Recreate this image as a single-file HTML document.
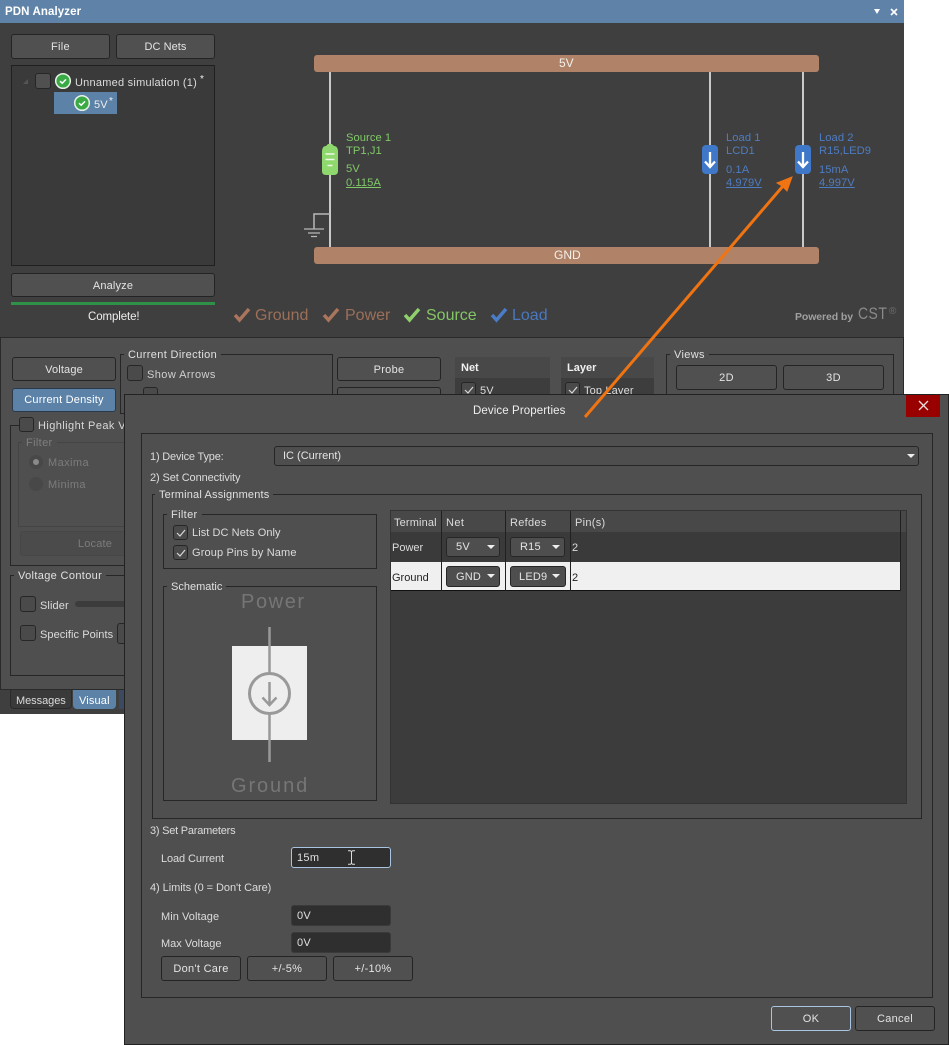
<!DOCTYPE html>
<html><head><meta charset="utf-8"><style>
html,body{margin:0;padding:0;background:#fff}
#p{position:relative;width:949px;height:1045px;overflow:hidden;background:#fff;font-family:"Liberation Sans",sans-serif}
#p div,#p svg{position:absolute;box-sizing:border-box}
.t{white-space:nowrap;font-size:11px;line-height:14px;letter-spacing:.15px;color:#dcdcdc;transform:translateY(-6px)}
.b{background:#505050;border:1px solid #242424;border-radius:3px;color:#e4e4e4;font-size:11px;letter-spacing:.3px;text-align:center;white-space:nowrap;padding-top:1px}
.g{border:1px solid #262626}
.l{background:#4f4f4f;padding:0 4px;white-space:nowrap;font-size:11px;line-height:14px;letter-spacing:.35px;color:#e0e0e0;transform:translateY(-6px)}
.c{background:#4a4a4a;border:1px solid #262626;border-radius:3px}
.in{background:#2f2f2f;border:1px solid #3a3a3a;border-radius:3px;color:#e0e0e0;font-size:11px;letter-spacing:.3px;padding-left:5px;padding-top:1px}
.cb{background:#4e4e4e;border:1px solid #262626;border-radius:3px;color:#e4e4e4;font-size:11px;letter-spacing:.2px;white-space:nowrap;padding-top:1px}
.ar{width:0;height:0;border-left:4px solid transparent;border-right:4px solid transparent;border-top:4px solid #eee}
.r1{color:#7fc968;font-size:11.2px!important;letter-spacing:.05px!important}.bl{color:#4e7cc2;font-size:11.2px!important;letter-spacing:.05px!important}
.lg{white-space:nowrap;font-size:16px;line-height:20px;transform:translateY(-10px)}
</style></head><body><div id="p">

<!-- main window -->
<div style="left:0;top:0;width:904px;height:23px;background:#5f83a8"></div>
<div class="t" style="left:5px;top:11px;color:#fff;font-weight:bold;font-size:11.5px;letter-spacing:.1px">PDN Analyzer</div>
<div class="ar" style="left:874px;top:9px;border-top-color:#fff;border-left-width:3.5px;border-right-width:3.5px;border-top-width:5px"></div>
<svg style="left:890px;top:8px" width="8" height="8"><path d="M1 1L7 7M7 1L1 7" stroke="#fff" stroke-width="1.6"/></svg>
<div style="left:0;top:23px;width:904px;height:314px;background:#3f3f3f"></div>

<div class="b" style="left:11px;top:34px;width:99px;height:25px;line-height:23px">File</div>
<div class="b" style="left:116px;top:34px;width:99px;height:25px;line-height:23px;letter-spacing:.05px">DC Nets</div>
<div style="left:11px;top:65px;width:204px;height:201px;background:#3a3a3a;border:1px solid #202020"></div>
<svg style="left:23px;top:79px" width="6" height="6"><path d="M5 0V5H0Z" fill="#555"/></svg>
<div class="c" style="left:35px;top:73px;width:16px;height:16px;background:#505050"></div>
<svg style="left:54px;top:72px" width="18" height="18"><circle cx="9" cy="9" r="7.3" fill="#3aaa45" stroke="#e6f2e6" stroke-width="1.5"/><path d="M6 9.2L8.2 11.2L12 7.4" fill="none" stroke="#fff" stroke-width="1.5"/></svg>
<div class="t" style="left:75px;top:82px;letter-spacing:.24px">Unnamed simulation (1)</div>
<div class="t" style="left:200px;top:79px;color:#eee;font-size:10px">*</div>
<div style="left:54px;top:92px;width:63px;height:22px;background:#5c82a8"></div>
<svg style="left:73px;top:94px" width="18" height="18"><circle cx="9" cy="9" r="7.3" fill="#3aaa45" stroke="#e6f2e6" stroke-width="1.5"/><path d="M6 9.2L8.2 11.2L12 7.4" fill="none" stroke="#fff" stroke-width="1.5"/></svg>
<div class="t" style="left:94px;top:104px;color:#eee">5V</div>
<div class="t" style="left:109px;top:101px;color:#eee;font-size:10px">*</div>
<div class="b" style="left:11px;top:273px;width:204px;height:24px;line-height:22px;letter-spacing:.15px">Analyze</div>
<div style="left:11px;top:302px;width:204px;height:3px;background:#2f9148"></div>
<div class="t" style="left:88px;top:316px;color:#eee;letter-spacing:-.1px;font-size:11.5px">Complete!</div>

<!-- schematic -->
<svg style="left:300px;top:40px" width="600" height="240">
<g stroke="#c9c9c9" stroke-width="2" fill="none">
<path d="M30 30V208M410 30V208M503 30V208"/>
<path d="M30 174H14V189" stroke-width="1.5" stroke="#b8b8b8"/>
<path d="M4 189H24M8 193H20M11 196.500H17" stroke-width="1.300" stroke="#b8b8b8"/>
</g>
<rect x="14" y="15" width="505" height="17" rx="3" fill="#b08368"/>
<rect x="14" y="207" width="505" height="17" rx="3" fill="#b08368"/>
<path d="M22 112Q22 106 26 106L28 104H32L34 106Q38 106 38 112V131Q38 135 34 135H26Q22 135 22 131Z" fill="#8ed86e"/>
<path d="M25.500 114H34.500M25.500 119.500H34.500M27.500 125.500H32.500" stroke="#f0f8e8" stroke-width="1.500"/>
<rect x="402" y="105" width="16" height="29" rx="4" fill="#3f78c8"/>
<rect x="495" y="105" width="16" height="29" rx="4" fill="#3f78c8"/>
<path d="M410 112V127M405 121.500L410 127L415 121.500M503 112V127M498 121.500L503 127L508 121.500" stroke="#fff" stroke-width="2.300" fill="none"/>
</svg>
<div class="t" style="left:559px;top:62px;color:#f4f0ec;font-size:12px;letter-spacing:0">5V</div>
<div class="t" style="left:554px;top:254px;color:#f4f0ec;font-size:12px;letter-spacing:0">GND</div>

<div class="t r1" style="left:346px;top:137px">Source 1</div>
<div class="t r1" style="left:346px;top:150px">TP1,J1</div>
<div class="t r1" style="left:346px;top:168px">5V</div>
<div class="t r1" style="left:346px;top:182px;text-decoration:underline">0.115A</div>

<div class="t bl" style="left:726px;top:137px">Load 1</div>
<div class="t bl" style="left:726px;top:150px">LCD1</div>
<div class="t bl" style="left:726px;top:169px">0.1A</div>
<div class="t bl" style="left:726px;top:182px;text-decoration:underline">4.979V</div>
<div class="t bl" style="left:819px;top:137px">Load 2</div>
<div class="t bl" style="left:819px;top:150px">R15,LED9</div>
<div class="t bl" style="left:819px;top:169px">15mA</div>
<div class="t bl" style="left:819px;top:182px;text-decoration:underline">4.997V</div>

<!-- legend -->
<svg style="left:234px;top:307px" width="320" height="16" fill="none" stroke-width="3.500">
<path d="M1 8L5.500 13L15 2" stroke="#a9755c"/>
<path d="M90 8L94.500 13L104 2" stroke="#a9755c"/>
<path d="M171 8L175.500 13L185 2" stroke="#8fd06c"/>
<path d="M258 8L262.500 13L272 2" stroke="#4a7cc8"/>
</svg>
<div class="lg" style="left:255px;top:316px;color:#9c6f59">Ground</div>
<div class="lg" style="left:345px;top:316px;color:#9c6f59">Power</div>
<div class="lg" style="left:426px;top:316px;color:#84c566">Source</div>
<div class="lg" style="left:512px;top:316px;color:#4a78be">Load</div>

<div class="t" style="left:795px;top:316px;color:#a0a0a0;font-weight:bold;letter-spacing:-.1px;font-size:10.500px">Powered by</div>
<div class="t" style="left:858px;top:313px;color:#8a8a8a;font-size:17px;letter-spacing:.6px;line-height:14px;transform:translateY(-6px) scaleX(.82);transform-origin:left">CST</div>
<div class="t" style="left:889px;top:311px;color:#6f6f6f;font-size:10px;letter-spacing:0">®</div>

<!-- lower panel -->
<div style="left:0;top:337px;width:904px;height:353px;background:#4f4f4f;border:1px solid #2a2a2a"></div>
<div class="b" style="left:12px;top:357px;width:104px;height:24px;line-height:22px;letter-spacing:.15px">Voltage</div>
<div class="b" style="left:12px;top:388px;width:104px;height:24px;line-height:21px;background:#5c82a8;border-color:#2a3a4c;color:#fff;letter-spacing:.2px">Current Density</div>
<div class="g" style="left:120px;top:354px;width:213px;height:60px"></div>
<div class="l" style="left:124px;top:354px">Current Direction</div>
<div class="c" style="left:127px;top:365px;width:16px;height:16px"></div>
<div class="t" style="left:147px;top:374px;color:#cfcfcf;letter-spacing:.42px">Show Arrows</div>
<div class="c" style="left:143px;top:387px;width:15px;height:15px"></div>
<div class="g" style="left:10px;top:425px;width:130px;height:141px"></div>
<div class="c" style="left:19px;top:417px;width:15px;height:15px;z-index:1"></div>
<div class="l" style="left:34px;top:425px;color:#d8d8d8;letter-spacing:.42px">Highlight Peak V</div>
<div class="g" style="left:18px;top:442px;width:120px;height:85px;border-color:#444"></div>
<div class="l" style="left:22px;top:442px;padding:0 4px;color:#7f7f7f">Filter</div>
<div style="left:29px;top:455px;width:14px;height:14px;border-radius:50%;background:#484848"></div>
<div style="left:33px;top:459px;width:6px;height:6px;border-radius:50%;background:#8a8a8a"></div>
<div class="t" style="left:48px;top:462px;color:#7c7c7c;letter-spacing:.42px">Maxima</div>
<div style="left:29px;top:477px;width:14px;height:14px;border-radius:50%;background:#484848"></div>
<div class="t" style="left:48px;top:484px;color:#7c7c7c;letter-spacing:.42px">Minima</div>
<div class="b" style="left:20px;top:531px;width:150px;height:25px;line-height:23px;background:#4b4b4b;border-color:#474747;color:#7c7c7c;letter-spacing:.2px">Locate</div>
<div class="g" style="left:10px;top:575px;width:130px;height:101px"></div>
<div class="l" style="left:14px;top:575px">Voltage Contour</div>
<div class="c" style="left:20px;top:596px;width:16px;height:16px"></div>
<div class="t" style="left:40px;top:605px;letter-spacing:.1px">Slider</div>
<div style="left:75px;top:601px;width:60px;height:6px;background:#3c3c3c;border-radius:3px"></div>
<div class="c" style="left:20px;top:625px;width:16px;height:16px"></div>
<div class="t" style="left:40px;top:634px;letter-spacing:.07px">Specific Points</div>
<div class="c" style="left:117px;top:623px;width:20px;height:21px"></div>

<div class="b" style="left:337px;top:357px;width:104px;height:24px;line-height:22px">Probe</div>
<div class="b" style="left:337px;top:387px;width:104px;height:24px"></div>
<div style="left:455px;top:357px;width:95px;height:21px;background:#484848"></div>
<div class="t" style="left:461px;top:367px;color:#f0f0f0;font-weight:bold;letter-spacing:0">Net</div>
<div style="left:455px;top:378px;width:95px;height:20px;background:#3d3d3d"></div>
<div class="c" style="left:461px;top:382px;width:15px;height:15px"></div>
<svg style="left:464px;top:386px" width="10" height="8"><path d="M1 4L4 7L9 1" fill="none" stroke="#d8d8d8" stroke-width="1.200"/></svg>
<div class="t" style="left:480px;top:390px">5V</div>
<div style="left:561px;top:357px;width:93px;height:21px;background:#484848"></div>
<div class="t" style="left:567px;top:367px;color:#f0f0f0;font-weight:bold;letter-spacing:0">Layer</div>
<div style="left:561px;top:378px;width:93px;height:20px;background:#3d3d3d"></div>
<div class="c" style="left:565px;top:382px;width:15px;height:15px"></div>
<svg style="left:568px;top:386px" width="10" height="8"><path d="M1 4L4 7L9 1" fill="none" stroke="#d8d8d8" stroke-width="1.200"/></svg>
<div class="t" style="left:584px;top:390px">Top Layer</div>
<div class="g" style="left:666px;top:354px;width:228px;height:60px"></div>
<div class="l" style="left:670px;top:354px">Views</div>
<div class="b" style="left:676px;top:365px;width:101px;height:25px;line-height:23px">2D</div>
<div class="b" style="left:783px;top:365px;width:101px;height:25px;line-height:23px">3D</div>

<!-- tabs -->
<div style="left:0;top:690px;width:130px;height:24px;background:#3f3f3f"></div>
<div style="left:10px;top:690px;width:62px;height:19px;background:#3a3a3a;border:1px solid #2a2a2a;border-top:0;border-radius:0 0 4px 4px"></div>
<div class="t" style="left:16px;top:700px;letter-spacing:-.05px">Messages</div>
<div style="left:73px;top:690px;width:43px;height:19px;background:#5c82a8;border-radius:0 0 4px 4px"></div>
<div class="t" style="left:79px;top:700px;color:#fff">Visual</div>
<div style="left:119px;top:690px;width:8px;height:19px;background:#3c4a60"></div>

<!-- dialog -->
<div style="left:124px;top:394px;width:825px;height:651px;background:#4f4f4f;border:1px solid #222"></div>
<div style="left:906px;top:395px;width:34px;height:22px;background:#990000"></div>
<svg style="left:918px;top:400px" width="11" height="11"><path d="M1 1L10 10M10 1L1 10" stroke="#f0e0e0" stroke-width="1.300"/></svg>
<div class="t" style="left:473px;top:410px;color:#eee;letter-spacing:.1px;font-size:11.500px">Device Properties</div>
<div class="g" style="left:141px;top:433px;width:792px;height:565px"></div>
<div class="t" style="left:150px;top:456px;letter-spacing:-.18px">1) Device Type:</div>
<div class="cb" style="left:274px;top:446px;width:645px;height:20px;line-height:17px;padding-left:8px;letter-spacing:0">IC (Current)</div>
<div class="ar" style="left:907px;top:454px"></div>
<div class="t" style="left:150px;top:477px;letter-spacing:-.1px">2) Set Connectivity</div>
<div class="g" style="left:152px;top:494px;width:770px;height:325px"></div>
<div class="l" style="left:155px;top:494px;letter-spacing:.17px">Terminal Assignments</div>

<div class="g" style="left:163px;top:514px;width:214px;height:55px"></div>
<div class="l" style="left:167px;top:514px">Filter</div>
<div class="c" style="left:173px;top:525px;width:15px;height:15px"></div>
<svg style="left:176px;top:529px" width="10" height="8"><path d="M1 4L4 7L9 1" fill="none" stroke="#d8d8d8" stroke-width="1.200"/></svg>
<div class="t" style="left:192px;top:532px;letter-spacing:.07px">List DC Nets Only</div>
<div class="c" style="left:173px;top:545px;width:15px;height:15px"></div>
<svg style="left:176px;top:549px" width="10" height="8"><path d="M1 4L4 7L9 1" fill="none" stroke="#d8d8d8" stroke-width="1.200"/></svg>
<div class="t" style="left:192px;top:552px;letter-spacing:.14px">Group Pins by Name</div>

<div class="g" style="left:163px;top:586px;width:214px;height:215px"></div>
<div class="l" style="left:167px;top:586px;letter-spacing:0">Schematic</div>
<div class="t" style="left:241px;top:601px;color:#767676;font-size:20px;letter-spacing:1.600px">Power</div>
<div class="t" style="left:231px;top:785px;color:#767676;font-size:20px;letter-spacing:1.900px">Ground</div>
<svg style="left:225px;top:620px" width="90" height="150">
<rect x="7" y="26" width="75" height="94" fill="#eeeeee"/>
<path d="M44.500 7V53M44.500 94V142" stroke="#999" stroke-width="2.500" fill="none"/>
<circle cx="44.500" cy="73.500" r="20" fill="none" stroke="#999" stroke-width="3"/>
<path d="M44.500 62V85M37.500 77.500L44.500 85L51.500 77.500" stroke="#999" stroke-width="2.500" fill="none"/>
</svg>

<!-- table -->
<div style="left:390px;top:510px;width:517px;height:294px;background:#3c3c3c;border:1px solid #333"></div>
<div style="left:391px;top:511px;width:515px;height:21px;background:#484848"></div>
<div style="left:391px;top:532px;width:509px;height:29px;background:#3a3a3a"></div>
<div style="left:391px;top:562px;width:509px;height:29px;background:#f0f0f0;border-bottom:1px solid #111"></div>
<div style="left:441px;top:511px;width:1px;height:80px;background:#202020"></div>
<div style="left:505px;top:511px;width:1px;height:80px;background:#202020"></div>
<div style="left:570px;top:511px;width:1px;height:80px;background:#202020"></div>
<div style="left:900px;top:511px;width:1px;height:80px;background:#202020"></div>
<div class="t" style="left:394px;top:522px">Terminal</div>
<div class="t" style="left:446px;top:522px;letter-spacing:.4px">Net</div>
<div class="t" style="left:510px;top:522px;letter-spacing:.3px">Refdes</div>
<div class="t" style="left:575px;top:522px;letter-spacing:.3px">Pin(s)</div>
<div class="t" style="left:392px;top:547px;letter-spacing:0">Power</div>
<div class="t" style="left:392px;top:577px;color:#222;letter-spacing:0">Ground</div>
<div class="t" style="left:572px;top:547px">2</div>
<div class="t" style="left:572px;top:577px;color:#222">2</div>
<div class="cb" style="left:446px;top:537px;width:54px;height:20px;line-height:17px;padding-left:9px">5V</div>
<div class="ar" style="left:487px;top:545px"></div>
<div class="cb" style="left:510px;top:537px;width:55px;height:20px;line-height:17px;padding-left:9px">R15</div>
<div class="ar" style="left:552px;top:545px"></div>
<div class="cb" style="left:446px;top:566px;width:54px;height:21px;line-height:18px;padding-left:9px">GND</div>
<div class="ar" style="left:487px;top:574px"></div>
<div class="cb" style="left:510px;top:566px;width:56px;height:21px;line-height:18px;padding-left:8px">LED9</div>
<div class="ar" style="left:552px;top:574px"></div>

<!-- params -->
<div class="t" style="left:150px;top:830px;letter-spacing:-.23px">3) Set Parameters</div>
<div class="t" style="left:161px;top:858px;letter-spacing:-.1px">Load Current</div>
<div class="in" style="left:291px;top:847px;width:100px;height:21px;line-height:18px;border-color:#a8c4e0">15m</div>
<svg style="left:347px;top:850px" width="9" height="15"><path d="M1 .7H3.500L4.500 1.700L5.500 .7H8M4.500 1.700V13.300M1 14.300H3.500L4.500 13.300L5.500 14.300H8" fill="none" stroke="#ddd" stroke-width="1"/></svg>
<div class="t" style="left:150px;top:887px;letter-spacing:-.06px">4) Limits (0 = Don't Care)</div>
<div class="t" style="left:161px;top:916px;letter-spacing:.06px">Min Voltage</div>
<div class="in" style="left:291px;top:905px;width:100px;height:21px;line-height:18px">0V</div>
<div class="t" style="left:161px;top:943px;letter-spacing:0">Max Voltage</div>
<div class="in" style="left:291px;top:932px;width:100px;height:21px;line-height:18px">0V</div>
<div class="b" style="left:161px;top:956px;width:80px;height:25px;line-height:23px">Don't Care</div>
<div class="b" style="left:247px;top:956px;width:80px;height:25px;line-height:23px">+/-5%</div>
<div class="b" style="left:333px;top:956px;width:80px;height:25px;line-height:23px">+/-10%</div>
<div class="b" style="left:771px;top:1006px;width:80px;height:25px;line-height:23px;border-color:#a8c4e0">OK</div>
<div class="b" style="left:855px;top:1006px;width:80px;height:25px;line-height:23px">Cancel</div>

<!-- orange arrow -->
<svg style="left:0;top:0;z-index:5" width="949" height="1045"><path d="M585 417L783 186" stroke="#f07412" stroke-width="3" fill="none"/><path d="M792 177L787 191L782 186L777 183Z" fill="#f07412" stroke="#f07412" stroke-width="1"/></svg>
</div></body></html>
